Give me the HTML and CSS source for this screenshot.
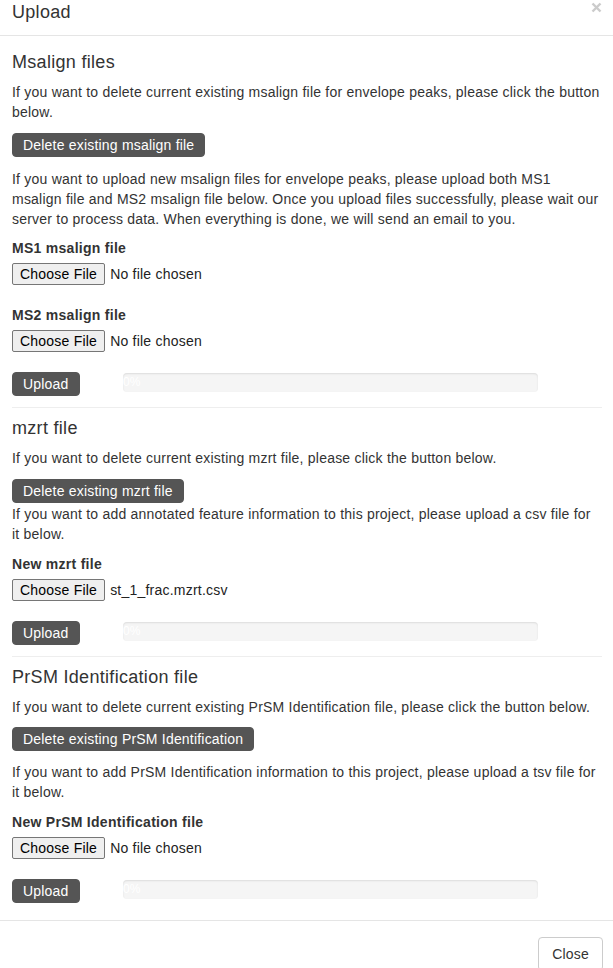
FILE: index.html
```html
<!DOCTYPE html>
<html lang="en">
<head>
<meta charset="utf-8">
<title>Upload</title>
<link rel="stylesheet" href="styles.css">
</head>
<body>
<div class="modal">
  <div class="modal-header">
    <h4 class="modal-title">Upload</h4>
    <button type="button" class="close" aria-label="Close">
      <svg class="close-icon" width="11" height="11" viewBox="0 0 11 11" aria-hidden="true">
        <path d="M1.5 1.5 L9.5 9.5 M9.5 1.5 L1.5 9.5" stroke="#000" stroke-width="2.4" stroke-linecap="butt" fill="none"/>
      </svg>
    </button>
  </div>
  <div class="modal-body">
    <section class="block">
      <h4 class="block-title">Msalign files</h4>
      <p class="lead-p">If you want to delete current existing msalign file for envelope peaks, please click the button below.</p>
      <div class="action"><button type="button" class="btn-dark">Delete existing msalign file</button></div>
      <p class="tight-p">If you want to upload new msalign files for envelope peaks, please upload both MS1 msalign file and MS2 msalign file below. Once you upload files successfully, please wait our server to process data. When everything is done, we will send an email to you.</p>
      <div class="field">
        <label class="field-label">MS1 msalign file</label>
        <div class="file"><span class="file-btn">Choose File</span><span class="file-name">No file chosen</span></div>
      </div>
      <div class="field">
        <label class="field-label">MS2 msalign file</label>
        <div class="file"><span class="file-btn">Choose File</span><span class="file-name">No file chosen</span></div>
      </div>
      <div class="upload-row">
        <div><button type="button" class="btn-dark">Upload</button></div>
        <div class="progress"><div class="progress-bar">0%</div></div>
      </div>
    </section>
    <hr class="divider">
    <section class="block">
      <h4 class="block-title">mzrt file</h4>
      <p class="lead-p">If you want to delete current existing mzrt file, please click the button below.</p>
      <div class="action action-tight"><button type="button" class="btn-dark">Delete existing mzrt file</button></div>
      <p>If you want to add annotated feature information to this project, please upload a csv file for it below.</p>
      <div class="field">
        <label class="field-label">New mzrt file</label>
        <div class="file"><span class="file-btn">Choose File</span><span class="file-name">st_1_frac.mzrt.csv</span></div>
      </div>
      <div class="upload-row">
        <div><button type="button" class="btn-dark">Upload</button></div>
        <div class="progress"><div class="progress-bar">0%</div></div>
      </div>
    </section>
    <hr class="divider">
    <section class="block">
      <h4 class="block-title">PrSM Identification file</h4>
      <p>If you want to delete current existing PrSM Identification file, please click the button below.</p>
      <div class="action action-mid"><button type="button" class="btn-dark">Delete existing PrSM Identification</button></div>
      <p>If you want to add PrSM Identification information to this project, please upload a tsv file for it below.</p>
      <div class="field">
        <label class="field-label">New PrSM Identification file</label>
        <div class="file"><span class="file-btn">Choose File</span><span class="file-name">No file chosen</span></div>
      </div>
      <div class="upload-row">
        <div><button type="button" class="btn-dark">Upload</button></div>
        <div class="progress"><div class="progress-bar">0%</div></div>
      </div>
    </section>
  </div>
  <div class="modal-footer">
    <button type="button" class="btn-default">Close</button>
  </div>
</div>
</body>
</html>
```
FILE: styles.css
```css
html, body {
  margin: 0;
  padding: 0;
  overflow: hidden;
  background: #fff;
}
body {
  font-family: "Liberation Sans", Arial, Helvetica, sans-serif;
  font-size: 14px;
  line-height: 20px;
  letter-spacing: 0.22px;
  color: #333;
}
.modal {
  width: 613px;
}
.modal-header {
  display: flex;
  justify-content: space-between;
  align-items: flex-start;
  padding: 0 11px 11px 12px;
  border-bottom: 1px solid #e5e5e5;
}
.modal-title {
  margin: 0;
  font-size: 18px;
  font-weight: 500;
  line-height: 24px;
  letter-spacing: 0.3px;
}
.close {
  display: block;
  border: 0;
  background: transparent;
  padding: 0;
  margin: 2px 0 0 0;
  line-height: 0;
  opacity: 0.2;
  cursor: pointer;
}
.close-icon {
  display: block;
}
.modal-body {
  padding: 6px 11px 17px 12px;
}
.block-title {
  margin: 10px 0 10px 0;
  font-size: 18px;
  font-weight: 500;
  line-height: 20px;
  letter-spacing: 0.3px;
}
p {
  margin: 0 0 10px 0;
}
.lead-p {
  margin-bottom: 11px;
}
.tight-p {
  margin-bottom: 9px;
}
.action {
  margin-bottom: 12px;
}
.action-tight {
  margin-bottom: 1px;
}
.action-mid {
  margin-bottom: 11px;
}
.btn-dark {
  display: inline-block;
  font-family: inherit;
  font-size: 14px;
  line-height: 20px;
  letter-spacing: 0.2px;
  padding: 1px 10px;
  border: 1px solid #555;
  border-radius: 4px;
  background: #555;
  color: #fff;
  cursor: pointer;
}
.field {
  margin-bottom: 20px;
}
.field-label {
  display: block;
  font-weight: bold;
  margin-bottom: 5px;
  letter-spacing: 0.28px;
}
.file {
  display: flex;
  align-items: center;
  height: 22px;
}
.file-btn {
  box-sizing: border-box;
  height: 22px;
  line-height: 20px;
  padding: 0 7px;
  border: 1px solid #767676;
  border-radius: 2px;
  background: #efefef;
  color: #000;
}
.file-name {
  margin-left: 5px;
  color: #222;
}
.upload-row {
  display: grid;
  grid-template-columns: 111px 415px;
  align-items: start;
  height: 24px;
  margin-top: 1px;
}
.upload-row .btn-dark {
  display: block;
}
.progress {
  margin-top: 1px;
  height: 19px;
  border-radius: 4px;
  background: #f5f5f5;
  box-shadow: inset 0 1px 2px rgba(0, 0, 0, 0.1);
  overflow: visible;
}
.progress-bar {
  width: 0;
  height: 100%;
  font-size: 12px;
  line-height: 19px;
  letter-spacing: 0;
  color: #fff;
  white-space: nowrap;
}
.divider {
  margin: 11px 0 0 0;
  border: 0;
  border-top: 1px solid #eee;
}
.modal-footer {
  display: flex;
  justify-content: flex-end;
  padding: 16px 10px 15px 12px;
  border-top: 1px solid #e5e5e5;
}
.btn-default {
  font-family: inherit;
  font-size: 14px;
  line-height: 20px;
  letter-spacing: 0.2px;
  padding: 6px 13px;
  border: 1px solid #ccc;
  border-radius: 4px;
  background: #fff;
  color: #333;
  cursor: pointer;
}
```
